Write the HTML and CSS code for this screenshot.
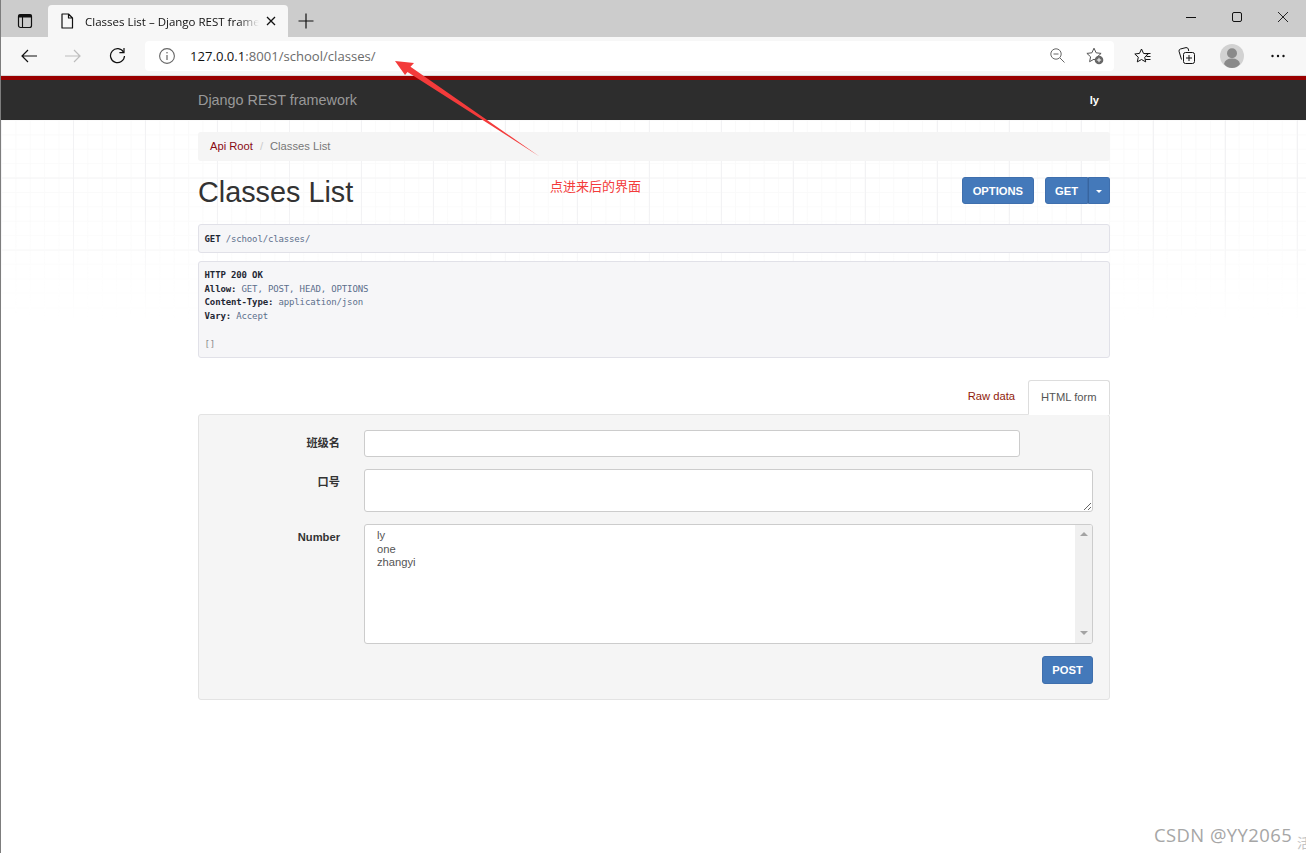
FILE: index.html
```html
<!DOCTYPE html>
<html lang="en">
<head>
    <meta charset="UTF-8">
    <meta name="viewport" content="width=device-width, initial-scale=1.0">
    <title>Classes List – Django REST framework</title>
    <link rel="stylesheet" href="styles.css">
</head>
<body>
    <div class="window">
        <header class="tabstrip">
            <svg class="tab-panel-icon" width="16" height="16" viewBox="0 0 16 16">
                <rect x="1.5" y="1.5" width="13" height="13" rx="2" fill="none" stroke="#111" stroke-width="1.2"/>
                <rect x="1.5" y="1.5" width="13" height="3" fill="#111"/>
                <path d="M5.5 4v10" stroke="#111" stroke-width="1.1"/>
            </svg>
            <div class="tab">
                <svg width="14" height="16" viewBox="0 0 14 16">
                    <path d="M2 1h6.5L12.5 5v10H2z M8.5 1v4h4" fill="none" stroke="#111" stroke-width="1.2" stroke-linejoin="round"/>
                </svg>
                <span class="tab-title">Classes List – Django REST framework</span>
                <svg class="tab-close" width="10" height="10" viewBox="0 0 10 10">
                    <path d="M1 1l8 8M9 1l-8 8" stroke="#111" stroke-width="1.3"/>
                </svg>
            </div>
            <svg class="tab-new" width="16" height="16" viewBox="0 0 16 16">
                <path d="M8 .5v15M.5 8h15" stroke="#111" stroke-width="1.2"/>
            </svg>
            <div class="window-controls">
                <svg width="10" height="10" viewBox="0 0 10 10"><path d="M0 5.5h10" stroke="#111"/></svg>
                <svg width="10" height="10" viewBox="0 0 10 10"><rect x=".5" y=".5" width="9" height="9" rx="1.5" fill="none" stroke="#111"/></svg>
                <svg width="10" height="10" viewBox="0 0 10 10"><path d="M0 0l10 10M10 0L0 10" stroke="#111" stroke-width=".9"/></svg>
            </div>
        </header>

        <div class="toolbar">
            <svg class="nav-back" width="16" height="14" viewBox="0 0 16 14">
                <path d="M16 7H1M7 1L1 7l6 6" fill="none" stroke="#111" stroke-width="1.2"/>
            </svg>
            <svg class="nav-forward" width="16" height="14" viewBox="0 0 16 14">
                <path d="M0 7h15M9 1l6 6-6 6" fill="none" stroke="#bdbdbd" stroke-width="1.2"/>
            </svg>
            <svg class="nav-reload" width="17" height="17" viewBox="0 0 17 17">
                <path d="M14.6 5.2A7 7 0 1 0 15.5 9" fill="none" stroke="#111" stroke-width="1.2"/>
                <path d="M15 1v4.6h-4.6" fill="none" stroke="#111" stroke-width="1.2"/>
            </svg>
            <div class="addressbar">
                <svg class="site-info" width="16" height="16" viewBox="0 0 16 16">
                    <circle cx="8" cy="8" r="7.4" fill="none" stroke="#666" stroke-width="1.1"/>
                    <path d="M8 7v5" stroke="#666" stroke-width="1.2"/>
                    <circle cx="8" cy="4.7" r=".8" fill="#666"/>
                </svg>
                <span class="url"><b>127.0.0.1</b>:8001/school/classes/</span>
                <svg class="zoom-out" width="15" height="15" viewBox="0 0 15 15">
                    <circle cx="6" cy="6" r="5.2" fill="none" stroke="#666"/>
                    <path d="M3.5 6h5M10 10l4.5 4.5" stroke="#666"/>
                </svg>
                <svg class="star-add" width="18" height="18" viewBox="0 0 18 18">
                    <path d="M8 1.2l2.1 4.6 5 .6-3.7 3.4 1 4.9L8 12.2l-4.4 2.5 1-4.9L.9 6.4l5-.6z" fill="none" stroke="#555" stroke-linejoin="round"/>
                    <circle cx="13" cy="13" r="4.3" fill="#666"/>
                    <path d="M13 10.8v4.4M10.8 13h4.4" stroke="#fff"/>
                </svg>
            </div>
            <svg class="favorites" width="17" height="16" viewBox="0 0 17 16">
                <path d="M7.5 1l2 4.4 4.7.6-3.5 3.2 1 4.7-4.2-2.4-4.2 2.4 1-4.7L.8 6l4.7-.6z" fill="none" stroke="#111" stroke-linejoin="round"/>
                <path d="M11.5 5.5h5M12.5 8.5h4M11.5 11.5h5" stroke="#111"/>
            </svg>
            <svg class="collections" width="17" height="17" viewBox="0 0 17 17">
                <path d="M3.5 12.5L1 4.2Q.8 2.5 2.4 2L8 .6Q9.8.4 10.3 2l.4 2" fill="none" stroke="#111"/>
                <rect x="5.5" y="5.5" width="11" height="11" rx="2" fill="#f7f7f7" stroke="#111"/>
                <path d="M11 8v6M8 11h6" stroke="#111"/>
            </svg>
            <svg class="avatar" width="24" height="24" viewBox="0 0 24 24">
                <circle cx="12" cy="12" r="12" fill="#d2d2d2"/>
                <circle cx="12" cy="9.2" r="5" fill="#8a8a8a"/>
                <path d="M4 20q1-5.5 8-5.5t8 5.5q-3 4-8 4t-8-4z" fill="#8a8a8a"/>
            </svg>
            <svg class="more" width="14" height="4" viewBox="0 0 14 4">
                <circle cx="1.5" cy="2" r="1.2" fill="#111"/>
                <circle cx="7" cy="2" r="1.2" fill="#111"/>
                <circle cx="12.5" cy="2" r="1.2" fill="#111"/>
            </svg>
        </div>

        <nav class="navbar">
            <div class="navbar-inner">
                <a class="brand">Django REST framework</a>
                <span class="navbar-user">ly</span>
            </div>
        </nav>

        <main class="page">
            <div class="container">
                <ul class="breadcrumb">
                    <li><a>Api Root</a></li>
                    <li class="sep">/</li>
                    <li class="active">Classes List</li>
                </ul>

                <div class="title-row">
                    <h1>Classes List</h1>
                    <div class="actions">
                        <button class="btn">OPTIONS</button>
                        <div class="btn-group">
                            <button class="btn btn-left">GET</button>
                            <button class="btn btn-caret"><span class="caret"></span></button>
                        </div>
                    </div>
                </div>

                <pre class="code code-request"><b>GET</b> <span class="val">/school/classes/</span></pre>
                <pre class="code"><b>HTTP 200 OK</b>
<b>Allow:</b> <span class="val">GET, POST, HEAD, OPTIONS</span>
<b>Content-Type:</b> <span class="val">application/json</span>
<b>Vary:</b> <span class="val">Accept</span>

<span class="pun">[]</span></pre>

                <div class="tabs">
                    <a class="tab-link">Raw data</a>
                    <a class="tab-link tab-current">HTML form</a>
                </div>
                <form class="well">
                    <label class="field-label">班级名</label>
                    <input class="field field-short" type="text">

                    <label class="field-label">口号</label>
                    <textarea class="field field-area"></textarea>

                    <label class="field-label">Number</label>
                    <div class="field multi">
                        <div class="multi-options">
                            <div>ly</div>
                            <div>one</div>
                            <div>zhangyi</div>
                        </div>
                        <div class="multi-scroll">
                            <span class="arrow-up"></span>
                            <span class="arrow-down"></span>
                        </div>
                    </div>

                    <div class="form-actions">
                        <button class="btn" type="button">POST</button>
                    </div>
                </form>
            </div>
        </main>

        <!-- screenshot annotation and watermark -->
        <svg class="note-arrow" width="1306" height="853" viewBox="0 0 1306 853">
            <polygon points="395,61 414,63 410.5,66.7 539.5,156.5 407.5,72 405,75" fill="#f33b3b"/>
        </svg>
        <span class="note-text">点进来后的界面</span>
        <span class="watermark">CSDN @YY2065</span>
        <span class="watermark-cut">活</span>
    </div>
</body>
</html>
```

FILE: styles.css
```css
* {
    box-sizing: border-box;
}

html, body {
    margin: 0;
    background: #fff;
}

.window {
    position: relative;
    width: 1306px;
    height: 853px;
    overflow: hidden;
    border-left: 1px solid #7d7d7d;
    font-family: "Liberation Sans", Arial, sans-serif;
    font-size: 11.2px;
    color: #333;
}

/* browser chrome */
.tabstrip {
    display: flex;
    align-items: center;
    height: 37px;
    background: #ccc;
}

.tab-panel-icon {
    margin-left: 16px;
    margin-top: 5px;
}

.tab {
    display: flex;
    align-items: center;
    width: 240px;
    height: 32px;
    margin-top: 5px;
    margin-left: 15px;
    padding-left: 12px;
    background: #f7f7f7;
    border-radius: 4px 4px 0 0;
}

.tab-title {
    width: 174px;
    margin-left: 11px;
    overflow: hidden;
    white-space: nowrap;
    font-family: "Open Sans", "Noto Sans", sans-serif;
    font-size: 11.5px;
    color: #111;
    -webkit-mask-image: linear-gradient(to right, #000 88%, transparent);
    mask-image: linear-gradient(to right, #000 88%, transparent);
}

.tab-close {
    margin-left: 7px;
}

.tab-new {
    margin-left: 10px;
    margin-top: 4px;
}

.window-controls {
    display: flex;
    gap: 36px;
    margin-left: auto;
    margin-right: 18px;
    margin-bottom: 4px;
}

.toolbar {
    display: flex;
    align-items: center;
    height: 39px;
    padding-bottom: 1px;
    background: #f7f7f7;
    border-bottom: 1px solid #d9d9d9;
}

.nav-back {
    margin-left: 20px;
}

.nav-forward {
    margin-left: 28px;
}

.nav-reload {
    margin-left: 28px;
}

.addressbar {
    display: flex;
    align-items: center;
    width: 969px;
    height: 30px;
    margin-left: 19px;
    padding-left: 14px;
    background: #fff;
    border-radius: 4px;
}

.url {
    margin-left: 15px;
    font-family: "Open Sans", "Noto Sans", sans-serif;
    font-size: 13.1px;
    color: #6b6b6b;
}

.url b {
    font-weight: 400;
    color: #111;
}

.zoom-out {
    margin-left: auto;
}

.star-add {
    margin-left: 21px;
    margin-right: 10px;
}

.favorites {
    margin-left: 20px;
}

.collections {
    margin-left: 27px;
}

.avatar {
    margin-left: 25px;
}

.more {
    margin-left: 27px;
}

/* django rest framework page */
.navbar {
    height: 44px;
    background: #2d2d2d;
    border-top: 4px solid #990000;
}

.navbar-inner {
    display: flex;
    align-items: center;
    justify-content: space-between;
    width: 912px;
    height: 40px;
    margin-left: 197px;
    padding-right: 11px;
}

.brand {
    font-size: 14.4px;
    color: #999;
}

.navbar-user {
    font-weight: 700;
    color: #fff;
}

.page {
    position: relative;
    height: 733px;
}

.page::before {
    content: "";
    position: absolute;
    left: 0;
    top: 0;
    width: 100%;
    height: 202px;
    background-image:
        linear-gradient(to right, #f2f2f4 1px, transparent 1px),
        linear-gradient(to bottom, #f4f4f5 1px, transparent 1px),
        linear-gradient(to right, #fafafa 1px, transparent 1px),
        linear-gradient(to bottom, #fafafa 1px, transparent 1px);
    background-size: 72px 72px, 72px 72px, 14.4px 14.4px, 14.4px 14.4px;
    background-position: 0 0, 0 57.6px, 0 0, 0 0;
    -webkit-mask-image: linear-gradient(to bottom, #000 45%, transparent);
    mask-image: linear-gradient(to bottom, #000 45%, transparent);
}

.container {
    position: relative;
    width: 912px;
    margin-left: 197px;
    padding-top: 12px;
}

.breadcrumb {
    display: flex;
    gap: 7px;
    height: 29px;
    margin: 0 0 16px;
    padding: 6.4px 12px;
    list-style: none;
    line-height: 16px;
    background: #f5f5f5;
    border-radius: 3px;
    color: #777;
}

.breadcrumb a {
    color: #8a0a14;
}

.breadcrumb .sep {
    color: #ccc;
}

.title-row {
    display: flex;
    justify-content: space-between;
    height: 47px;
}

h1 {
    margin: 0;
    font-size: 28.8px;
    font-weight: 400;
    line-height: 30px;
    color: #333;
}

.actions {
    display: flex;
    gap: 11px;
    align-items: flex-start;
}

.btn-group {
    display: flex;
}

.btn {
    height: 27.2px;
    padding: 0 10px;
    font-family: inherit;
    font-size: 11.2px;
    font-weight: 700;
    color: #fff;
    background: #4479ba;
    border: 1px solid #3f6fad;
    border-radius: 3px;
}

.btn-left {
    width: 43px;
    padding: 0;
    border-radius: 3px 0 0 3px;
}

.btn-caret {
    width: 22px;
    padding: 0;
    border-left: 1px solid #37659f;
    border-radius: 0 3px 3px 0;
}

.caret {
    display: inline-block;
    vertical-align: middle;
    border-top: 3.5px solid #fff;
    border-left: 3.5px solid transparent;
    border-right: 3.5px solid transparent;
}

.code {
    margin: 0 0 8px;
    padding: 7px 5.6px 5.8px;
    font-family: "DejaVu Sans Mono", "Liberation Mono", monospace;
    font-size: 9px;
    letter-spacing: -0.14px;
    line-height: 13.7px;
    color: #5c6b84;
    background: #f6f6f8;
    border: 1px solid #e1e1e8;
    border-radius: 3px;
}

.code-request {
    padding-top: 8.2px;
    padding-bottom: 5.1px;
}

.code b {
    font-weight: 700;
    color: #1f2733;
}

.code .val {
    color: #5c6f8c;
}

.code .pun {
    color: #8c8c8c;
}

.tabs {
    display: flex;
    justify-content: flex-end;
    height: 35px;
    margin-top: 21.5px;
    margin-bottom: -1px;
}

.tab-link {
    position: relative;
    padding: 0 13px;
    line-height: 33px;
    color: #8f1a0a;
}

.tab-current {
    width: 82px;
    height: 35px;
    padding: 0 12px;
    color: #555;
    background: #fff;
    border: 1px solid #ddd;
    border-bottom-color: #fff;
    border-radius: 3px 3px 0 0;
}

.well {
    display: grid;
    grid-template-columns: 141px 1fr;
    column-gap: 24px;
    row-gap: 12px;
    height: 286px;
    padding: 15px 16px 15px 0;
    background: #f5f5f5;
    border: 1px solid #e3e3e3;
    border-radius: 3px;
}

.field-label {
    padding-top: 5.6px;
    font-family: "Liberation Sans", "Noto Sans CJK SC", sans-serif;
    font-weight: 700;
    line-height: 16px;
    text-align: right;
    color: #333;
}

.field {
    display: block;
    background: #fff;
    border: 1px solid #ccc;
    border-radius: 3px;
}

.field-short {
    width: 656px;
    height: 27px;
}

.field-area {
    width: 100%;
    height: 43px;
    margin: 0;
}

.multi {
    display: flex;
    height: 120px;
    overflow: hidden;
}

.multi-options {
    flex: 1;
    padding: 4.5px 12px;
    line-height: 13.6px;
    color: #555;
}

.multi-scroll {
    display: flex;
    flex-direction: column;
    align-items: center;
    justify-content: space-between;
    width: 17px;
    padding: 7px 0 8px;
    background: #f0f0f0;
}

.arrow-up {
    border-bottom: 4px solid #a3a3a3;
    border-left: 4px solid transparent;
    border-right: 4px solid transparent;
}

.arrow-down {
    border-top: 4px solid #a3a3a3;
    border-left: 4px solid transparent;
    border-right: 4px solid transparent;
}

.form-actions {
    grid-column: 2;
    display: flex;
    justify-content: flex-end;
}

.form-actions .btn {
    width: 51px;
    height: 28px;
    padding: 0;
}

/* things lying over the screenshot */
.note-arrow {
    position: absolute;
    left: -1px;
    top: 0;
    pointer-events: none;
}

.note-text {
    position: absolute;
    left: 549px;
    top: 177px;
    font-family: "Noto Sans CJK SC", sans-serif;
    font-size: 13px;
    line-height: 18px;
    color: #f33b3b;
}

.watermark {
    position: absolute;
    left: 1153px;
    top: 822px;
    font-family: "Open Sans", "Noto Sans", sans-serif;
    font-size: 18.4px;
    line-height: 26px;
    letter-spacing: 0.45px;
    color: #a6a6a6;
}

.watermark-cut {
    position: absolute;
    left: 1296px;
    top: 832px;
    font-family: "Noto Sans CJK SC", sans-serif;
    font-size: 14px;
    color: #c4c4c4;
}
```
